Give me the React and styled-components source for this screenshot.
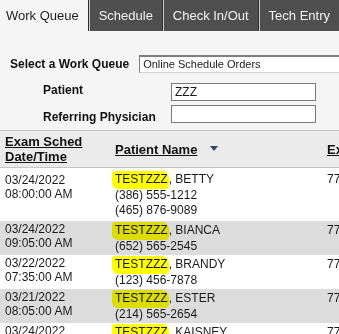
import { Fragment } from 'react';
import styled, { createGlobalStyle } from 'styled-components';

const GlobalStyle = createGlobalStyle`
  body {
    margin: 0;
    background: #f5f5f5;
    font-family: "Liberation Sans", Arial, sans-serif;
    color: #1a1a1a;
    overflow: hidden;
  }
`;

const TabBar = styled.div`
  display: flex;
  height: 31px;
  background: #4f4f4f;
  white-space: nowrap;
`;

const Tab = styled.div`
  display: flex;
  align-items: center;
  padding: 0 9px;
  font-size: 13px;
  color: ${p => (p.$active ? '#1e1e1e' : '#f2f2f2')};
  background: ${p => (p.$active ? '#f5f5f5' : 'transparent')};
  &:first-child {
    padding-left: 6px;
  }
`;

const TabDivider = styled.span`
  width: 1px;
  border-left: 1px solid #2c2c2c;
  background: #cfcfcf;
`;

const Filters = styled.div`
  padding: 24px 0 6px;
  border-bottom: 1px solid #c6c6c6;
`;

const QueueRow = styled.div`
  display: flex;
  align-items: center;
  padding-left: 10px;
  white-space: nowrap;
`;

const Label = styled.div`
  font-size: 12px;
  font-weight: bold;
  line-height: 14px;
  color: #111;
`;

const QueueSelect = styled.div`
  margin-left: 10px;
  flex: 1;
  height: 15px;
  padding-left: 3px;
  background: #fff;
  border-top: 2px solid #7d7d7d;
  border-left: 1px solid #7d7d7d;
  border-bottom: 1px solid #d2d2d2;
  font-size: 11px;
  line-height: 15px;
`;

const SearchGrid = styled.div`
  display: flex;
  margin: 10px 0 0 43px;
`;

const LabelColumn = styled.div`
  width: 128px;
  display: flex;
  flex-direction: column;
  gap: 13px;
`;

const InputColumn = styled.div`
  display: flex;
  flex-direction: column;
  gap: 4px;
`;

const TextBox = styled.div`
  width: 140px;
  height: 16px;
  padding-left: 3px;
  background: #fff;
  border: 1px solid #7a7a7a;
  font-size: 12px;
  line-height: 17px;
`;

const HeaderRow = styled.div`
  display: grid;
  grid-template-columns: 110px 212px 80px;
  align-items: center;
  padding: 3px 0 3px 5px;
  background: #ebebeb;
  border-bottom: 1px solid #c5c5c5;
  font-size: 13px;
  font-weight: bold;
  line-height: 15px;
  white-space: nowrap;
`;

const HeadLink = styled.span`
  text-decoration: underline;
  color: #111;
`;

const SortArrow = styled.span`
  display: inline-block;
  width: 0;
  height: 0;
  margin: 0 0 3px 13px;
  vertical-align: middle;
  border-left: 4px solid transparent;
  border-right: 4px solid transparent;
  border-top: 5px solid #2f4b62;
`;

const Row = styled.div`
  display: grid;
  grid-template-columns: 110px 212px 80px;
  padding: ${p => (p.$first ? '3px 0 3px 5px' : '1px 0 1px 5px')};
  background: ${p => (p.$shaded ? '#dcdcdc' : '#ffffff')};
  font-size: 12px;
  white-space: nowrap;
`;

const DateCell = styled.div`
  line-height: 14px;
  padding-top: ${p => (p.$first ? '2px' : '0')};
`;

const NameCell = styled.div`
  line-height: 15px;
`;

const NameLine = styled.div`
  line-height: 17px;
`;

const Marker = styled.span`
  display: inline-block;
  padding: 2px 1px 3px 3px;
  margin: 0 0 -1px -3px;
  line-height: 13px;
  background: #ffff00;
  mix-blend-mode: multiply;
  border-radius: 3px 7px 4px 6px;
`;

const ExamCell = styled.div`
  line-height: 17px;
`;

const tabs = ['Work Queue', 'Schedule', 'Check In/Out', 'Tech Entry'];

const orders = [
  { date: '03/24/2022', time: '08:00:00 AM', name: 'BETTY', phones: ['(386) 555-1212', '(465) 876-9089'] },
  { date: '03/24/2022', time: '09:05:00 AM', name: 'BIANCA', phones: ['(652) 565-2545'] },
  { date: '03/22/2022', time: '07:35:00 AM', name: 'BRANDY', phones: ['(123) 456-7878'] },
  { date: '03/21/2022', time: '08:05:00 AM', name: 'ESTER', phones: ['(214) 565-2654'] },
  { date: '03/24/2022', time: '08:15:00 AM', name: 'KAISNEY', phones: ['(555) 555-5555'] },
];

export default function App() {
  return (
    <>
      <GlobalStyle />
      <TabBar>
        {tabs.map((t, i) => (
          <Fragment key={t}>
            {i > 0 && <TabDivider />}
            <Tab $active={i === 0}>{t}</Tab>
          </Fragment>
        ))}
      </TabBar>

      <Filters>
        <QueueRow>
          <Label>Select a Work Queue</Label>
          <QueueSelect>Online Schedule Orders</QueueSelect>
        </QueueRow>
        <SearchGrid>
          <LabelColumn>
            <Label>Patient</Label>
            <Label>Referring Physician</Label>
          </LabelColumn>
          <InputColumn>
            <TextBox>ZZZ</TextBox>
            <TextBox />
          </InputColumn>
        </SearchGrid>
      </Filters>

      <HeaderRow>
        <div>
          <HeadLink>Exam Sched</HeadLink>
          <br />
          <HeadLink>Date/Time</HeadLink>
        </div>
        <div>
          <HeadLink>Patient Name</HeadLink>
          <SortArrow />
        </div>
        <div>
          <HeadLink>Exam</HeadLink>
        </div>
      </HeaderRow>

      {orders.map((o, i) => (
        <Row key={i} $first={i === 0} $shaded={i % 2 === 1}>
          <DateCell $first={i === 0}>
            {o.date}
            <br />
            {o.time}
          </DateCell>
          <NameCell>
            <NameLine>
              <Marker>TESTZZZ</Marker>, {o.name}
            </NameLine>
            {o.phones.map(p => (
              <div key={p}>{p}</div>
            ))}
          </NameCell>
          <ExamCell>77</ExamCell>
        </Row>
      ))}
    </>
  );
}
